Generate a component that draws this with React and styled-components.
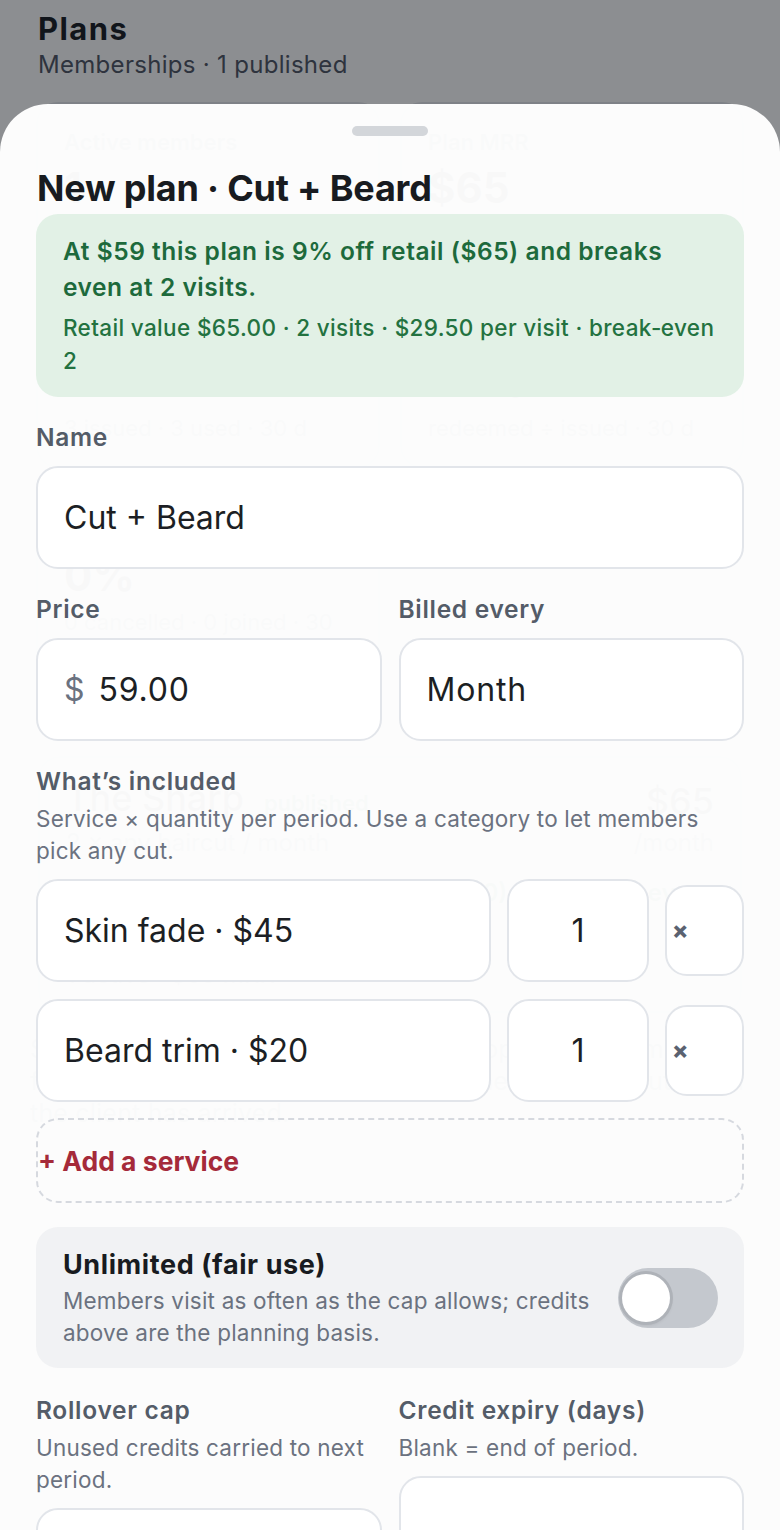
import React from "react";
import styled, { createGlobalStyle } from "styled-components";

const GlobalStyle = createGlobalStyle`
  * { box-sizing: border-box; }
  html, body { margin: 0; padding: 0; }
  body {
    font-family: Inter, "Noto Sans", "Liberation Sans", sans-serif;
    color: #1c1f24;
    background: #fff;
    overflow: hidden;
  }
`;

const Screen = styled.div`
  position: relative;
  height: 1530px;
  overflow: hidden;
  background: #fff;
`;

/* ---------- page underneath ---------- */

const Page = styled.div`
  padding: 10px 38px 0 38px;
`;

const PageTitle = styled.h1`
  margin: 0;
  font-size: 31px;
  line-height: 38px;
  font-weight: 700;
  letter-spacing: 1.4px;
  color: #15181d;
`;

const PageSub = styled.div`
  margin-top: 1px;
  font-size: 24px;
  line-height: 32px;
  letter-spacing: 0.3px;
  color: #4b5260;
`;

const StatGrid = styled.div`
  margin: 21px -2px 0;
  display: grid;
  grid-template-columns: minmax(0, 1fr) minmax(0, 1fr);
  column-gap: 20px;
  row-gap: 22px;
`;

const StatCard = styled.div`
  padding: 22px 26px;
  border-radius: 22px;
  border: 2px solid #e5e7eb;
`;

const StatLabel = styled.div`
  font-size: 22px;
  line-height: 32px;
  font-weight: 600;
  color: #6b7280;
`;

const StatValue = styled.div`
  margin-top: 4px;
  font-size: 42px;
  line-height: 52px;
  font-weight: 700;
  color: #15181d;
`;

const StatSub = styled.div`
  margin-top: 4px;
  font-size: 22px;
  line-height: 32px;
  color: #6b7280;
`;

const SectionHead = styled.div`
  margin-top: 2px;
  display: flex;
  justify-content: space-between;
  align-items: flex-start;
`;

const SectionTitle = styled.div`
  padding-top: 12px;
  font-size: 26px;
  line-height: 36px;
  font-weight: 800;
  letter-spacing: 1px;
  color: #6b7280;
`;

const NewPlan = styled.div`
  font-size: 24px;
  line-height: 36px;
  font-weight: 600;
  color: #a52a3a;
`;

const PlanCard = styled.div`
  margin-top: 12px;
  padding: 18px 26px;
  border-radius: 22px;
  border: 2px solid #e5e7eb;
`;

const PlanTop = styled.div`
  display: flex;
  justify-content: space-between;
  align-items: center;
  font-size: 36px;
  line-height: 44px;
  font-weight: 500;
`;

const Badge = styled.span`
  margin-left: 20px;
  font-size: 22px;
  font-weight: 600;
  color: #1e6b3d;
`;

const PlanMeta = styled.div`
  display: flex;
  justify-content: space-between;
  font-size: 24px;
  line-height: 36px;
  color: #6b7280;
`;

const PlanNote = styled.div`
  margin: 14px 0 10px;
  font-size: 24px;
  line-height: 36px;
  font-weight: 600;
  color: #1e6b3d;
`;

const Footnote = styled.div`
  margin: 20px -8px 0;
  font-size: 25px;
  line-height: 32px;
  letter-spacing: 0.2px;
  color: #6b7280;
`;

/* ---------- sheet ---------- */

const Backdrop = styled.div`
  position: absolute;
  inset: 0;
  background: rgba(15, 18, 25, 0.48);
`;

const Sheet = styled.div`
  position: absolute;
  top: 104px;
  left: 0;
  right: 0;
  bottom: 0;
  overflow: hidden;
  padding: 22px 36px 0;
  border-radius: 48px 48px 0 0;
  background: rgba(255, 255, 255, 0.972);
`;

const Handle = styled.div`
  width: 76px;
  height: 10px;
  margin: 0 auto 30px;
  border-radius: 5px;
  background: #d3d6da;
`;

const Title = styled.h2`
  margin: 0 0 4px 1px;
  font-size: 36px;
  line-height: 44px;
  font-weight: 700;
  letter-spacing: -0.2px;
  color: #181b20;
`;

const Summary = styled.div`
  padding: 19px 27px 20px 27px;
  border-radius: 22px;
  background: #e2f1e6;
  color: #1d6a3c;
`;

const SummaryLead = styled.div`
  font-size: 24.5px;
  line-height: 36px;
  font-weight: 600;
  letter-spacing: 0.55px;
`;

const SummaryDetail = styled.div`
  margin-top: 6px;
  font-size: 22.5px;
  line-height: 33px;
  font-weight: 500;
  letter-spacing: 0.35px;
  color: #237240;
`;

const Form = styled.div`
  margin-top: 24px;
  display: flex;
  flex-direction: column;
  gap: 24px;
`;

const Field = styled.div`
  display: flex;
  flex-direction: column;
  min-width: 0;
`;

const Label = styled.div`
  font-size: 24.5px;
  line-height: 32px;
  font-weight: 600;
  letter-spacing: 0.7px;
  color: #545c68;
`;

const Help = styled.div`
  margin-top: 6px;
  font-size: 22.5px;
  line-height: 32px;
  letter-spacing: 0.2px;
  color: #6b7280;
`;

const Box = styled.div`
  margin-top: ${(p) => (p.$tight ? 12 : 13)}px;
  height: 103px;
  display: flex;
  align-items: center;
  gap: 14px;
  padding: 0 26px;
  border: 2px solid #e2e5ea;
  border-radius: 22px;
  background: #fff;
  min-width: 0;
`;

const Input = styled.input`
  flex: 1;
  width: 100%;
  min-width: 0;
  border: 0;
  outline: 0;
  padding: 0;
  background: transparent;
  font-family: inherit;
  font-size: 32px;
  letter-spacing: ${(p) => (p.$wide ? "0.8px" : "0")};
  color: #1c1f24;
  text-align: ${(p) => (p.$center ? "center" : "left")};
`;

const Prefix = styled.span`
  font-size: 32px;
  color: #6b7280;
`;

const Pair = styled.div`
  margin-top: ${(p) => (p.$pushed ? 2 : 0)}px;
  display: grid;
  grid-template-columns: minmax(0, 1fr) minmax(0, 1fr);
  column-gap: 17px;
  align-items: start;
`;

const Rows = styled.div`
  margin-top: 12px;
  display: flex;
  flex-direction: column;
  gap: 17px;
`;

const ServiceRow = styled.div`
  display: grid;
  grid-template-columns: minmax(0, 1fr) 142px 79px;
  column-gap: 16px;
  align-items: center;
`;

const RowBox = styled(Box)`
  margin-top: 0;
  padding: ${(p) => (p.$center ? "0 10px" : "0 26px")};
`;

const RemoveButton = styled.button`
  height: 91px;
  padding: 0 0 0 5px;
  border: 2px solid #e2e5ea;
  border-radius: 22px;
  background: #fff;
  text-align: left;
  font-family: inherit;
  font-size: 24px;
  font-weight: 800;
  color: #5b6270;
  cursor: pointer;
`;

const AddService = styled.button`
  margin-top: 16px;
  width: 100%;
  height: 85px;
  padding: 0;
  border: 2px dashed #d6d9df;
  border-radius: 22px;
  background: transparent;
  text-align: left;
  font-family: inherit;
  font-size: 26.5px;
  font-weight: 700;
  color: #a52a3a;
  cursor: pointer;
`;

const ToggleCard = styled.div`
  display: flex;
  align-items: center;
  gap: 10px;
  padding: 20px 26px 19px 27px;
  border-radius: 22px;
  background: #f1f2f4;
`;

const ToggleText = styled.div`
  flex: 1;
`;

const ToggleTitle = styled.div`
  font-size: 27px;
  line-height: 36px;
  font-weight: 700;
  letter-spacing: 0.6px;
  color: #181b20;
`;

const ToggleHelp = styled(Help)`
  margin-top: 2px;
`;

const Track = styled.div`
  flex: none;
  width: 100px;
  height: 60px;
  padding: 6px 4px;
  border-radius: 30px;
  background: ${(p) => (p.$on ? "#1e6b3d" : "#c4c8ce")};
  display: flex;
  justify-content: ${(p) => (p.$on ? "flex-end" : "flex-start")};
`;

const Knob = styled.div`
  width: 48px;
  height: 48px;
  border-radius: 50%;
  background: #fff;
  box-shadow: 0 0 0 3px #aeb2b8, 0 2px 4px rgba(0, 0, 0, 0.18);
`;

const services = [
  { name: "Skin fade · $45", qty: "1" },
  { name: "Beard trim · $20", qty: "1" },
];

const stats = [
  { label: "Active members", value: "1", sub: "1 joined · 30 d" },
  { label: "Plan MRR", value: "$65", sub: "1 plan" },
  { label: "Credits outstanding", value: "1", sub: "3 issued · 3 used · 30 d" },
  { label: "Utilization", value: "50%", sub: "redeemed ÷ issued · 30 d" },
  { label: "Churn", value: "0%", sub: "0 cancelled · 0 joined · 30 d" },
];

export default function App() {
  return (
    <>
      <GlobalStyle />
      <Screen>
        <Page>
          <PageTitle>Plans</PageTitle>
          <PageSub>Memberships · 1 published</PageSub>
          <StatGrid>
            {stats.map((s) => (
              <StatCard key={s.label}>
                <StatLabel>{s.label}</StatLabel>
                <StatValue>{s.value}</StatValue>
                <StatSub>{s.sub}</StatSub>
              </StatCard>
            ))}
          </StatGrid>
          <SectionHead>
            <SectionTitle>YOUR PLANS</SectionTitle>
            <NewPlan>+ New plan</NewPlan>
          </SectionHead>
          <PlanCard>
            <PlanTop>
              <span>
                The Sharp<Badge>published</Badge>
              </span>
              <span>$65</span>
            </PlanTop>
            <PlanMeta>
              <span>2 × any haircut / month</span>
              <span>/month</span>
            </PlanMeta>
            <PlanNote>At $65 this plan is 28% off retail ($90) and breaks even at 2 visits.</PlanNote>
            <PlanMeta>
              <span>1 active · $65 MRR</span>
            </PlanMeta>
          </PlanCard>
          <Footnote>
            Show archived · Members join at /&lt;shop&gt;/join and manage from their /me link. Credits are
            redeemed at checkout when the client has arrived.
          </Footnote>
        </Page>

        <Backdrop />

        <Sheet>
          <Handle />
          <Title>New plan · Cut + Beard</Title>
          <Summary>
            <SummaryLead>At $59 this plan is 9% off retail ($65) and breaks even at 2 visits.</SummaryLead>
            <SummaryDetail>Retail value $65.00 · 2 visits · $29.50 per visit · break&#8209;even 2</SummaryDetail>
          </Summary>

          <Form>
            <Field>
              <Label>Name</Label>
              <Box>
                <Input size={1} defaultValue="Cut + Beard" />
              </Box>
            </Field>

            <Pair>
              <Field>
                <Label>Price</Label>
                <Box>
                  <Prefix>$</Prefix>
                  <Input size={1} $wide defaultValue="59.00" />
                </Box>
              </Field>
              <Field>
                <Label>Billed every</Label>
                <Box>
                  <Input size={1} $wide defaultValue="Month" />
                </Box>
              </Field>
            </Pair>

            <Field>
              <Label>What’s included</Label>
              <Help>Service × quantity per period. Use a category to let members pick any cut.</Help>
              <Rows>
                {services.map((s) => (
                  <ServiceRow key={s.name}>
                    <RowBox>
                      <Input size={1} defaultValue={s.name} />
                    </RowBox>
                    <RowBox $center>
                      <Input size={1} $center defaultValue={s.qty} />
                    </RowBox>
                    <RemoveButton aria-label="Remove">×</RemoveButton>
                  </ServiceRow>
                ))}
              </Rows>
              <AddService>+ Add a service</AddService>
            </Field>

            <ToggleCard>
              <ToggleText>
                <ToggleTitle>Unlimited (fair use)</ToggleTitle>
                <ToggleHelp>Members visit as often as the cap allows; credits above are the planning basis.</ToggleHelp>
              </ToggleText>
              <Track>
                <Knob />
              </Track>
            </ToggleCard>

            <Pair $pushed>
              <Field>
                <Label>Rollover cap</Label>
                <Help>Unused credits carried to next period.</Help>
                <Box $tight />
              </Field>
              <Field>
                <Label>Credit expiry (days)</Label>
                <Help>Blank = end of period.</Help>
                <Box $tight />
              </Field>
            </Pair>
          </Form>
        </Sheet>
      </Screen>
    </>
  );
}
